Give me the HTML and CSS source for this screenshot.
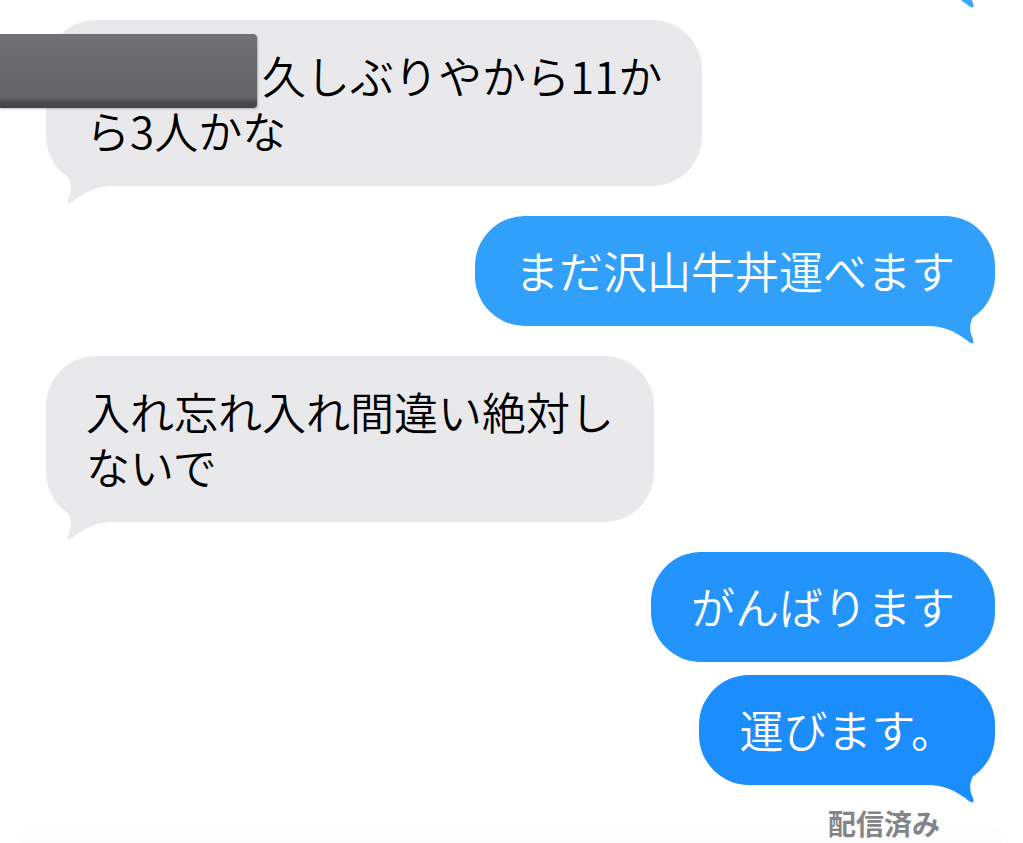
FILE: index.html
```html
<!DOCTYPE html>
<html lang="ja">
<head>
<meta charset="utf-8">
<title>メッセージ</title>
<link rel="stylesheet" href="styles.css">
</head>
<body>
<main class="chat">
  <div class="row out">
    <div class="bubble blue b0 offscreen">
      <svg class="tail tail-right" viewBox="0 0 60 48" aria-hidden="true"><path d="M2 4 L2 26 C20 27 31 35 40 42 Q46 46 44 39 C40 31 39 21 49 10 L49 4 Z"/></svg>
    </div>
  </div>

  <div class="row in">
    <div class="bubble gray">
      <span class="hidden-name"></span>久しぶりやから11か<br>ら3人かな
      <div class="redact"></div>
      <svg class="tail tail-left" viewBox="0 0 60 48" aria-hidden="true"><path d="M2 4 L2 26 C20 27 31 35 40 42 Q46 46 44 39 C40 31 39 21 49 10 L49 4 Z"/></svg>
    </div>
  </div>

  <div class="row out">
    <div class="bubble blue b1">
      まだ沢山牛丼運べます
      <svg class="tail tail-right" viewBox="0 0 60 48" aria-hidden="true"><path d="M2 4 L2 26 C20 27 31 35 40 42 Q46 46 44 39 C40 31 39 21 49 10 L49 4 Z"/></svg>
    </div>
  </div>

  <div class="row in">
    <div class="bubble gray">
      入れ忘れ入れ間違い絶対し<br>ないで
      <svg class="tail tail-left" viewBox="0 0 60 48" aria-hidden="true"><path d="M2 4 L2 26 C20 27 31 35 40 42 Q46 46 44 39 C40 31 39 21 49 10 L49 4 Z"/></svg>
    </div>
  </div>

  <div class="row out">
    <div class="bubble blue b2">がんばります</div>
  </div>

  <div class="row out same">
    <div class="bubble blue b3">
      運びます。
      <svg class="tail tail-right" viewBox="0 0 60 48" aria-hidden="true"><path d="M2 4 L2 26 C20 27 31 35 40 42 Q46 46 44 39 C40 31 39 21 49 10 L49 4 Z"/></svg>
    </div>
  </div>

  <div class="status">配信済み</div>
</main>
<div class="fade"></div>
</body>
</html>
```
FILE: styles.css
```css
html, body {
  margin: 0;
  padding: 0;
  background: #ffffff;
  overflow: hidden;
  height: 843px;
}

body {
  font-family: "Noto Sans CJK JP", "Noto Sans", sans-serif;
}

.chat {
  display: flex;
  flex-direction: column;
  padding: 0 28px 0 46px;
}

.row {
  display: flex;
  margin-top: 30px;
}

.row.in { justify-content: flex-start; }
.row.out { justify-content: flex-end; }
.row.same { margin-top: 13px; }

.row:first-child { margin-top: -120px; }

.bubble {
  position: relative;
  padding: 27px 40px 28px;
  font-size: 44px;
  font-weight: 350;
  line-height: 55px;
  border-radius: 50px;
  white-space: nowrap;
}

.bubble.gray {
  background: #e9e9eb;
  color: #000000;
  padding-top: 28px;
}

.bubble.blue {
  color: #ffffff;
}

.b0 { background: #38a8f8; }
.b1 { background: #30a0fa; }
.b2 { background: #2394fc; }
.b3 { background: #1c8dfd; }

.offscreen {
  box-sizing: border-box;
  width: 420px;
  height: 110px;
}

.tail {
  position: absolute;
  width: 60px;
  height: 48px;
  bottom: -22px;
}

.tail-right { right: 6px; }
.tail-left { left: 6px; transform: scaleX(-1); }

.b0 .tail { fill: #38a8f8; }
.b1 .tail { fill: #30a0fa; }
.b3 .tail { fill: #1c8dfd; }
.gray .tail { fill: #e9e9eb; }

.hidden-name {
  display: inline-block;
  width: 176px;
}

.redact {
  position: absolute;
  left: -46px;
  top: 14px;
  width: 257px;
  height: 74px;
  border-radius: 0 4px 4px 0;
  background: linear-gradient(to bottom, #727274 0%, #69696b 40%, #656567 85%, #4c4c50 92%, #444448 100%);
  box-shadow: 1px 1px 2px rgba(0, 0, 0, 0.25);
}

.status {
  align-self: flex-end;
  margin: 23px 55px 0 0;
  font-size: 28px;
  line-height: 30px;
  font-weight: 600;
  color: #858589;
}

.fade {
  position: fixed;
  left: 20px;
  right: 20px;
  bottom: 0;
  height: 26px;
  background: linear-gradient(to bottom, rgba(0, 0, 0, 0), rgba(0, 0, 0, 0.012));
  border-radius: 30px 30px 0 0;
  pointer-events: none;
}
```
